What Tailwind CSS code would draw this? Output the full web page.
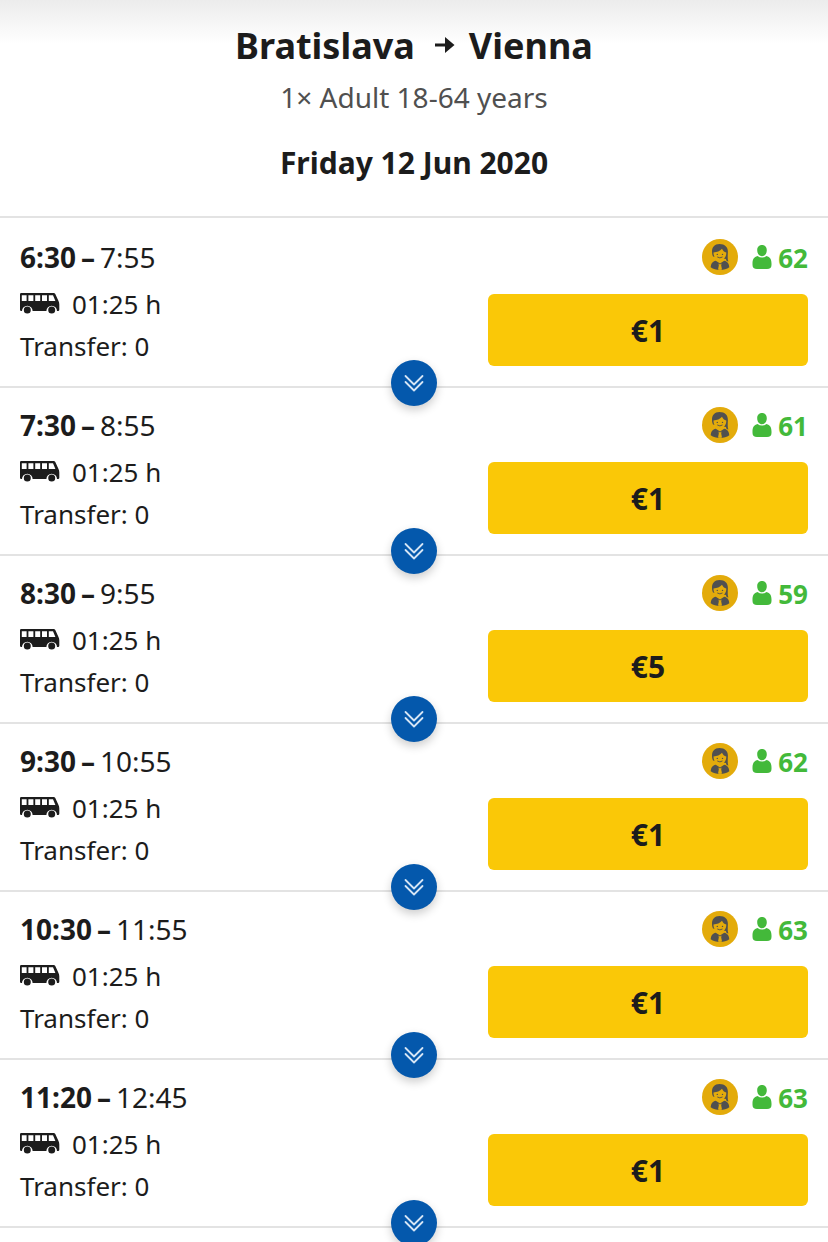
<!DOCTYPE html>
<html lang="en">
<head>
<meta charset="utf-8">
<meta name="viewport" content="width=device-width, initial-scale=1">
<title>Bratislava – Vienna</title>
<script src="https://cdn.jsdelivr.net/npm/@tailwindcss/browser@4"></script>
</head>
<body class="bg-white font-['Noto_Sans','Open_Sans',sans-serif] text-[#1c1c1c]">
<svg class="hidden" aria-hidden="true">
  <symbol id="bus" viewBox="0 0 40 22">
    <path fill="currentColor" fill-rule="evenodd" d="M1.2 0H33.5Q34.8 0 35.3 1.1L38.6 8.2Q39.3 9.8 39.3 11.5V16.8Q39.3 18 38.1 18H37A5.3 5.3 0 0 0 26.4 18H12.6A5.3 5.3 0 0 0 2 18H1.2Q0 18 0 16.8V1.2Q0 0 1.2 0ZM1.8 2.3V8H6.6V2.3ZM8.4 2.3V8H13.4V2.3ZM15.2 2.3V8H20.2V2.3ZM22 2.3V8H27V2.3ZM28.8 2.3V8H35.4L33 2.3Z"/>
    <circle cx="7.3" cy="17" r="3.5" fill="currentColor"/>
    <circle cx="31.7" cy="17" r="3.5" fill="currentColor"/>
  </symbol>
  <symbol id="steward" viewBox="0 0 36 36">
    <circle cx="18" cy="18" r="18" fill="#e3ab0b"/>
    <path fill="#505050" d="M17.500 5C12.500 5 10 8.200 10 12.500C10 14.500 10.300 16 11 17.500L24 20C24 21.500 24.700 22.400 26.400 22.400C25.500 20.500 25.700 18 25.900 13C26 8.200 23 5 17.500 5Z"/>
    <path fill="#e3ab0b" d="M11.500 13.400C15 13.200 18 12 20 9.700C20.800 11.700 22.300 13 24.300 13.500C24.500 17.500 21.800 21.400 17.900 21.400C14 21.400 11.300 17.500 11.500 13.400Z"/>
    <path fill="#505050" d="M13.800 21.700C10.500 22.600 9 24.200 8.700 28.300C11.300 30.200 14.200 31 18 31C21.800 31 24.700 30.200 27.300 28.300C27 24.200 25.500 22.600 22.200 21.700L18 24.600Z"/>
    <path fill="#e3ab0b" d="M16.500 24.500L18 25.400L19.500 24.500L19.200 26.500L20 30.500L18 31L16 30.500L16.800 26.500Z"/>
    <path fill="none" stroke="#505050" stroke-width=".9" stroke-linecap="round" d="M15.600 18.200Q17.900 19.800 20.200 18.200"/>
    <circle cx="15.300" cy="15.400" r=".7" fill="#505050"/>
    <circle cx="20.500" cy="15.400" r=".7" fill="#505050"/>
  </symbol>
  <symbol id="seat" viewBox="0 0 20 24">
    <path fill="currentColor" d="M10 0C13 0 14.800 2.200 14.800 5.200C14.800 8.600 12.800 11.200 10 11.200C7.200 11.200 5.200 8.600 5.200 5.200C5.200 2.200 7 0 10 0ZM5.500 11Q7.500 12.500 10 12.500Q12.500 12.500 14.500 11C18 11.800 19.500 14.500 19.500 18.500V20C19.500 22.500 18 24 15 24H5C2 24 .5 22.500 .5 20V18.500C.5 14.500 2 11.800 5.500 11Z"/>
  </symbol>
  <symbol id="chevrons" viewBox="0 0 20 18">
    <path fill="none" stroke="currentColor" stroke-width="1.800" stroke-linecap="round" stroke-linejoin="round" d="M1.500 2L10 10.500L18.500 2M1.500 8L10 16.500L18.500 8"/>
  </symbol>
</svg>
<main class="min-h-screen overflow-clip">
  <header class="border-b-2 border-[#e3e3e3] bg-linear-to-b from-[#ececec] to-white to-[44px] px-5 pt-5 pb-3 text-center">
    <h1 class="flex items-center justify-center text-[36px] leading-[52px] font-bold">
      <span>Bratislava</span>
      <svg class="mr-3.5 mb-0.5 ml-5 h-4 w-5" viewBox="0 0 20 16" role="img" aria-label="to"><path fill="currentColor" d="M0 6.500H10V0L19.500 8L10 16V9.500H0Z"/></svg>
      <span>Vienna</span>
    </h1>
    <p class="text-[28px] leading-[50px] text-[#505050]">1× Adult 18-64 years</p>
    <h2 class="text-[30px] leading-[82px] font-bold">Friday 12 Jun 2020</h2>
  </header>
  <ul id="connections" class="pt-0.5"></ul>
</main>
<script>
  const connections = [
    ["6:30", "7:55", 62, "€1"],
    ["7:30", "8:55", 61, "€1"],
    ["8:30", "9:55", 59, "€5"],
    ["9:30", "10:55", 62, "€1"],
    ["10:30", "11:55", 63, "€1"],
    ["11:20", "12:45", 63, "€1"],
  ];
  document.getElementById("connections").innerHTML = connections.map(([from, to, seats, price]) => `
    <li class="relative flex justify-between border-b-2 border-[#e3e3e3] px-5 pb-5">
      <div class="pt-4 text-[26px]">
        <h3 class="text-[28px] leading-[42px] font-normal"><b class="font-bold">${from}<span class="mx-[5px]">–</span></b>${to}</h3>
        <p class="flex items-center leading-[52px]"><svg class="mr-3 h-[22px] w-10" role="img" aria-label="Bus"><use href="#bus"/></svg>01:25 h</p>
        <p class="leading-[32px]">Transfer: 0</p>
      </div>
      <div class="w-80 pt-[19px]">
        <div class="mb-[19px] flex h-9 items-center justify-end text-[26px] font-bold text-[#43b93a]">
          <svg class="mr-3.5 size-9" role="img" aria-label="Steward on board"><use href="#steward"/></svg>
          <svg class="mr-1.5 h-6 w-5" role="img" aria-label="Free seats"><use href="#seat"/></svg>
          <span class="pt-0.5">${seats}</span>
        </div>
        <button type="button" class="h-[72px] w-full rounded-md bg-[#fac807] text-[30px] font-bold">${price}</button>
      </div>
      <button type="button" aria-label="Show details" class="absolute -bottom-5 left-1/2 z-10 flex size-[46px] -translate-x-1/2 items-center justify-center rounded-full bg-[#0458ac] text-[#d5e5f5] shadow-[0_4px_10px_rgba(0,0,0,0.2)]"><svg class="h-[18px] w-5"><use href="#chevrons"/></svg></button>
    </li>`).join("");
</script>
</body>
</html>
